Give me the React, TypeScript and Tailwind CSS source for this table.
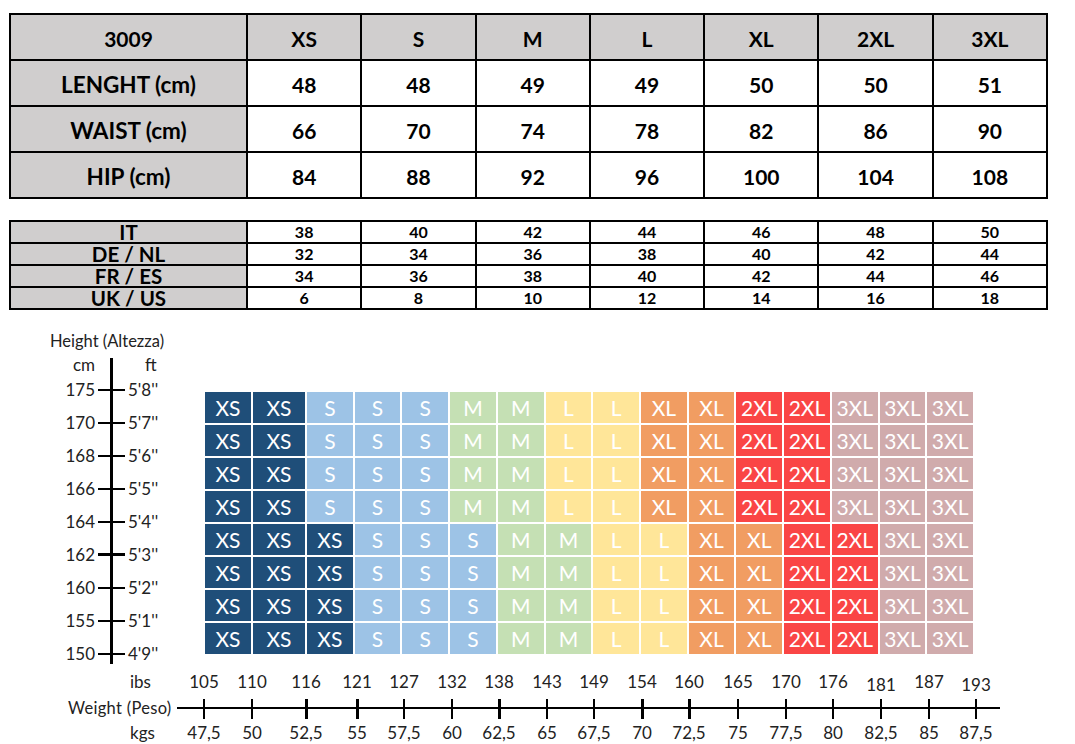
const SIZES = ['XS', 'S', 'M', 'L', 'XL', '2XL', '3XL']

const MEASURES: [string, string[]][] = [
  ['LENGHT (cm)', ['48', '48', '49', '49', '50', '50', '51']],
  ['WAIST (cm)', ['66', '70', '74', '78', '82', '86', '90']],
  ['HIP (cm)', ['84', '88', '92', '96', '100', '104', '108']],
]

const CONVERSIONS: [string, number[]][] = [
  ['IT', [38, 40, 42, 44, 46, 48, 50]],
  ['DE / NL', [32, 34, 36, 38, 40, 42, 44]],
  ['FR / ES', [34, 36, 38, 40, 42, 44, 46]],
  ['UK / US', [6, 8, 10, 12, 14, 16, 18]],
]

const HEIGHTS: [string, string][] = [
  ['175', "5'8''"], ['170', "5'7''"], ['168', "5'6''"], ['166', "5'5''"], ['164', "5'4''"],
  ['162', "5'3''"], ['160', "5'2''"], ['155', "5'1''"], ['150', "4'9''"],
]

const TALL = ['XS', 'XS', 'S', 'S', 'S', 'M', 'M', 'L', 'L', 'XL', 'XL', '2XL', '2XL', '3XL', '3XL', '3XL']
const SHORT = ['XS', 'XS', 'XS', 'S', 'S', 'S', 'M', 'M', 'L', 'L', 'XL', 'XL', '2XL', '2XL', '3XL', '3XL']
const GRID = [TALL, TALL, TALL, TALL, SHORT, SHORT, SHORT, SHORT]

const CELL_BG: Record<string, string> = {
  XS: 'bg-[#1f4e79]',
  S: 'bg-[#9dc3e6]',
  M: 'bg-[#c5e0b4]',
  L: 'bg-[#ffe699]',
  XL: 'bg-[#f19d62]',
  '2XL': 'bg-[#fa4545]',
  '3XL': 'bg-[#d0abac]',
}

// weight ticks: x position, lbs, kg, bold tick, label sits lower
const WEIGHTS: { x: number; lbs: string; kg: string; bold?: boolean; low?: boolean }[] = [
  { x: 204, lbs: '105', kg: '47,5' },
  { x: 252, lbs: '110', kg: '50' },
  { x: 306, lbs: '116', kg: '52,5', bold: true },
  { x: 357, lbs: '121', kg: '55', bold: true },
  { x: 404, lbs: '127', kg: '57,5' },
  { x: 452, lbs: '132', kg: '60' },
  { x: 499, lbs: '138', kg: '62,5', bold: true },
  { x: 547, lbs: '143', kg: '65' },
  { x: 594, lbs: '149', kg: '67,5' },
  { x: 642, lbs: '154', kg: '70', bold: true },
  { x: 689, lbs: '160', kg: '72,5', bold: true },
  { x: 738, lbs: '165', kg: '75' },
  { x: 786, lbs: '170', kg: '77,5' },
  { x: 833, lbs: '176', kg: '80' },
  { x: 881, lbs: '181', kg: '82,5', low: true },
  { x: 929, lbs: '187', kg: '85' },
  { x: 976, lbs: '193', kg: '87,5', low: true },
]

export default function App() {
  return (
    <div className="w-[1075px] h-[744px] bg-white text-black font-['Lato',sans-serif] overflow-hidden">
      {/* measurements */}
      <div className="ml-[9px] mt-[13px] w-[1039px] grid grid-cols-[235px_repeat(7,1fr)] gap-[2px] bg-black p-[2px] font-bold text-[21px]">
        <div className="h-[44px] pt-[3px] flex items-center justify-center bg-[#d0cece]">3009</div>
        {SIZES.map((s) => (
          <div key={s} className="h-[44px] pt-[3px] flex items-center justify-center bg-[#d0cece]">{s}</div>
        ))}
        {MEASURES.map(([label, vals]) => (
          <Row key={label} label={label} vals={vals} />
        ))}
      </div>

      {/* size conversions */}
      <div className="ml-[9px] mt-[21px] w-[1039px] grid grid-cols-[235px_repeat(7,1fr)] gap-[2px] bg-black p-[2px] font-bold">
        {CONVERSIONS.map(([label, vals]) => (
          <>
            <div key={label} className="h-[20px] flex items-center justify-center bg-[#d0cece] text-[20.5px] leading-none">{label}</div>
            {vals.map((v, i) => (
              <div key={label + i} className="h-[20px] flex items-center justify-center bg-white text-[16px] leading-none">{v}</div>
            ))}
          </>
        ))}
      </div>

      {/* height / weight chart */}
      <div className="mt-[21px] flex">
        <div className="w-[205px] shrink-0">
          <div className="pl-[50px] text-[16.5px] leading-[20px] text-[#222]">Height (Altezza)</div>
          <div className="mt-[5px] flex text-[17px] text-[#222]">
            <div className="w-[96px] text-right">
              <div className="h-[17px] leading-[17px] pr-[1px]">cm</div>
              {HEIGHTS.map(([cm]) => (
                <div key={cm} className="h-[33px] leading-[33px] pr-[1px]">{cm}</div>
              ))}
            </div>
            <div className="w-[30px] relative">
              <div className="absolute top-[2px] bottom-[6px] left-[14px] w-[3px] bg-black" />
              <div className="h-[17px]" />
              {HEIGHTS.map(([cm]) => (
                <div key={cm} className="h-[33px] flex items-center justify-center">
                  <div className={`w-[27px] bg-black ${cm === '162' ? 'h-[3px]' : 'h-[2px]'}`} />
                </div>
              ))}
            </div>
            <div className="pl-[2px]">
              <div className="h-[17px] leading-[17px] pl-[17px]">ft</div>
              {HEIGHTS.map(([cm, ft]) => (
                <div key={cm} className="h-[33px] leading-[33px]">{ft}</div>
              ))}
            </div>
          </div>
        </div>

        <div className="pt-[61px]">
          <div className="w-[768px] grid grid-cols-[46px_52px_repeat(14,1fr)] gap-[2px] text-white text-[21px]">
            {GRID.flatMap((row, r) =>
              row.map((s, c) => (
                <div key={`${r}-${c}`} className={`h-[31px] flex items-center justify-center leading-none ${CELL_BG[s]}`}>
                  {s}
                </div>
              ))
            )}
          </div>
        </div>
      </div>

      {/* weight axis */}
      <div className="relative flex text-[#222]">
        <div className="w-[180px] shrink-0">
          <div className="h-[24px] leading-[24px] pl-[130px] text-[17px]">ibs</div>
          <div className="h-[29px] flex items-center pl-[68px] text-[16.5px] tracking-[0.3px]">Weight (Peso)</div>
          <div className="h-[20px] leading-[20px] pl-[130px] text-[17px]">kgs</div>
        </div>
        <div className="absolute left-[177px] w-[823px] top-[37px] h-[2px] bg-black" />
        <div className="flex">
          {WEIGHTS.map((w, i) => (
            <div
              key={w.lbs}
              className="w-[48px] flex flex-col items-center text-[17px]"
              style={{ marginLeft: i === 0 ? 0 : w.x - WEIGHTS[i - 1].x - 48 }}
            >
              <div className={`h-[24px] leading-[24px] ${w.low ? 'pt-[3px]' : ''}`}>{w.lbs}</div>
              <div className="h-[29px] flex items-center">
                <div className={`h-[20px] bg-black ${w.bold ? 'w-[3px]' : 'w-[2px]'}`} />
              </div>
              <div className="h-[20px] leading-[20px]">{w.kg}</div>
            </div>
          ))}
        </div>
      </div>
    </div>
  )
}

function Row({ label, vals }: { label: string; vals: string[] }) {
  return (
    <>
      <div className="h-[44px] pt-[3px] flex items-center justify-center bg-[#d0cece] text-[22.5px]">{label}</div>
      {vals.map((v, i) => (
        <div key={i} className="h-[44px] pt-[3px] flex items-center justify-center bg-white">{v}</div>
      ))}
    </>
  )
}
